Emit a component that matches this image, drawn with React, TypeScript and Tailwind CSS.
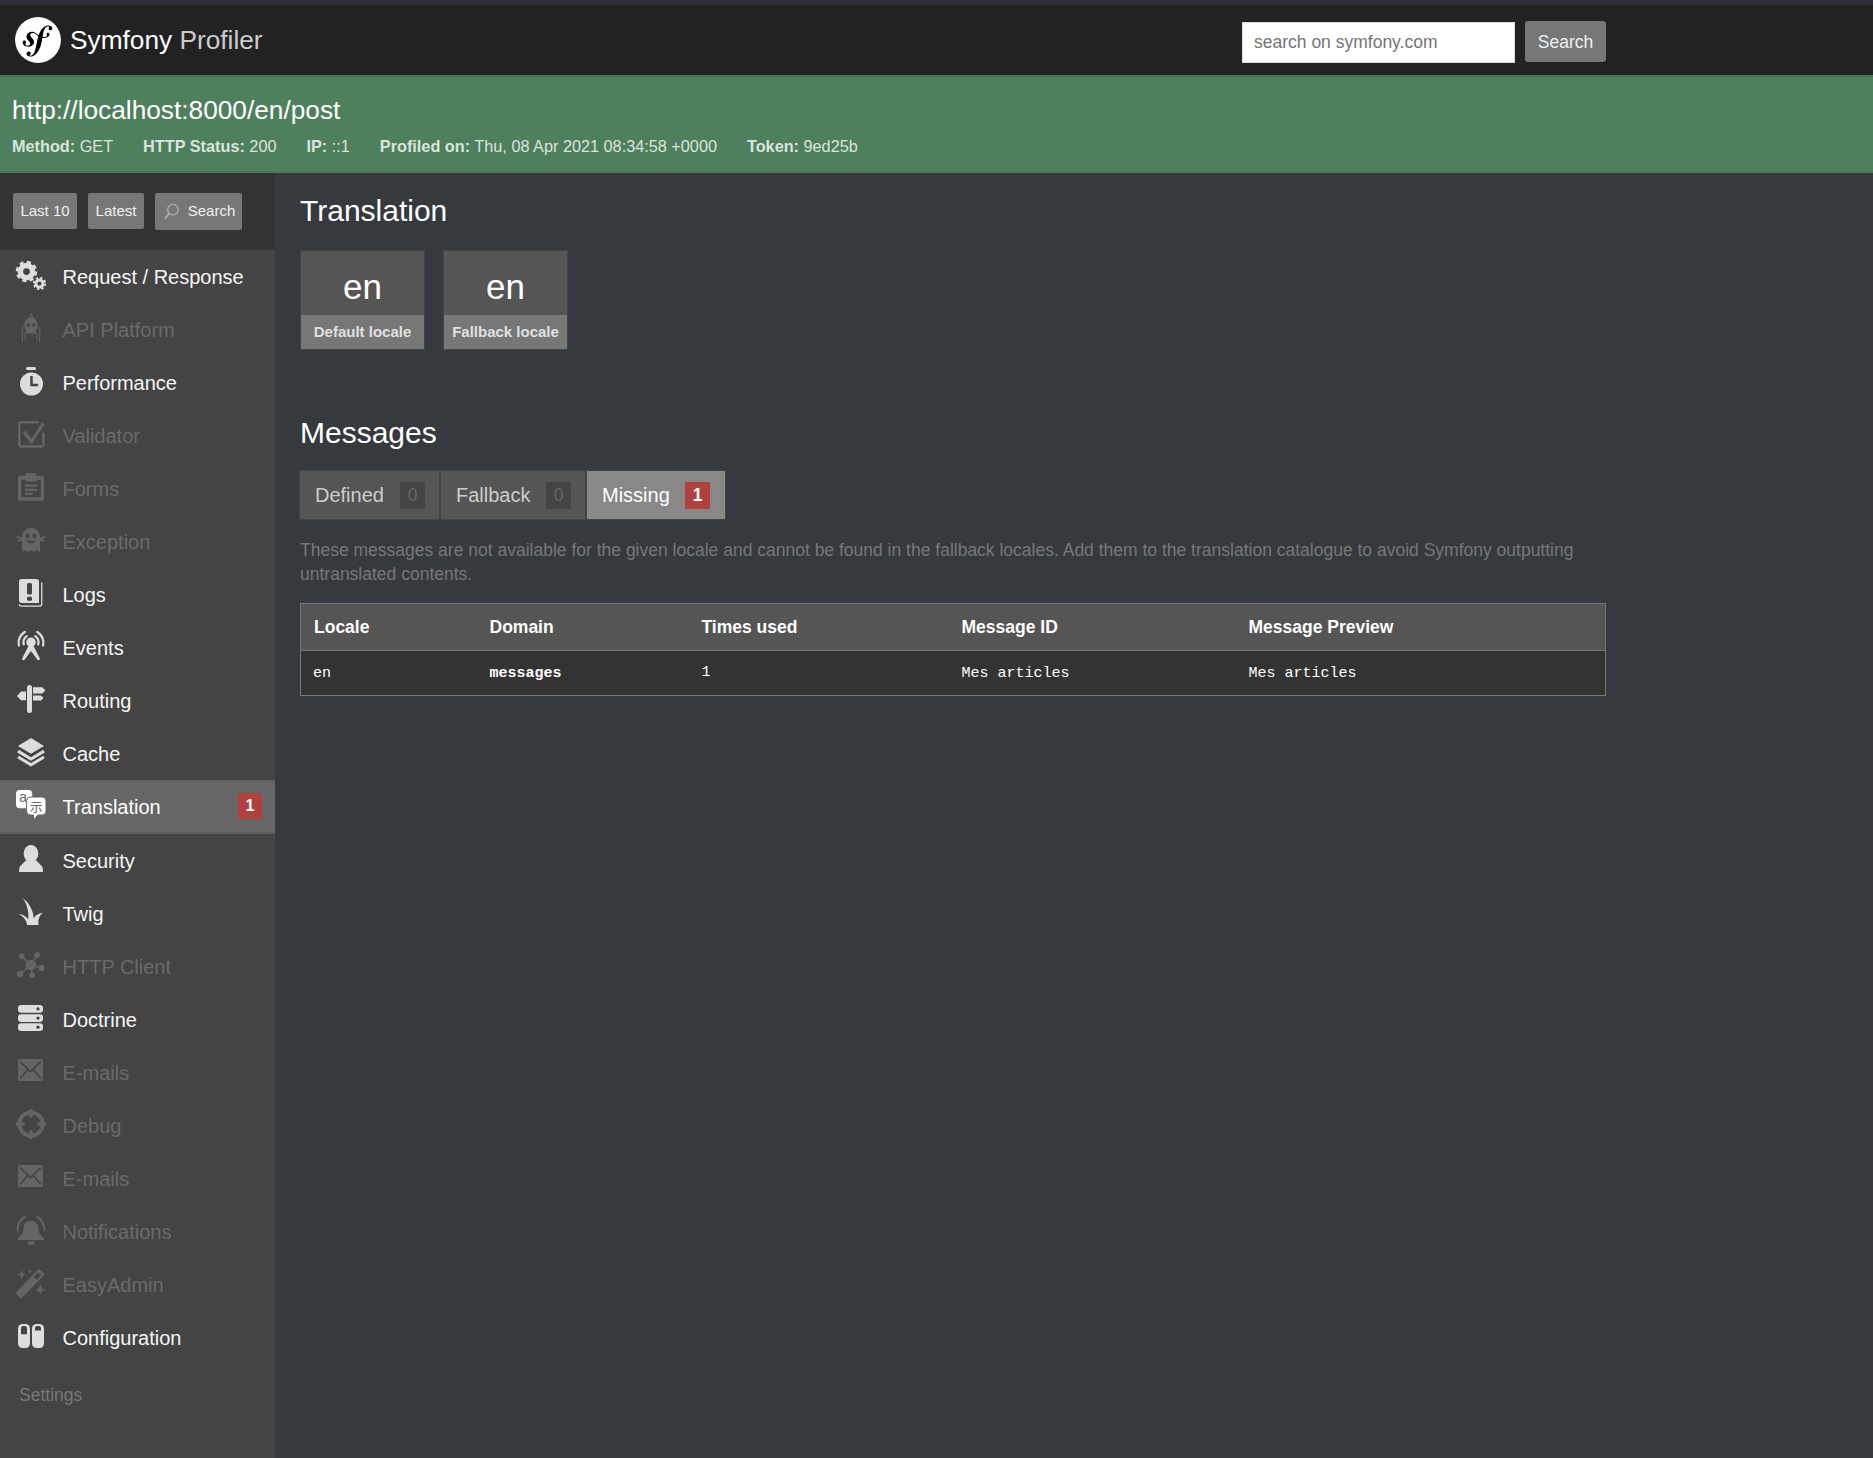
import React from "react";
import { SiSymfony } from "react-icons/si";

const I = ({ children }: { children: React.ReactNode }) => (
  <svg viewBox="0 0 24 24" width="30" height="30" fill="currentColor" className="shrink-0 overflow-visible">{children}</svg>
);

const icons: Record<string, React.ReactNode> = {
  request: (
    <I>
      <circle cx="8.4" cy="9.2" r="4.9" fill="none" stroke="currentColor" strokeWidth="4.4" />
      <circle cx="8.4" cy="9.2" r="7.6" fill="none" stroke="currentColor" strokeWidth="2" strokeDasharray="3.3 2.67" />
      <circle cx="18.8" cy="18.8" r="2.9" fill="none" stroke="currentColor" strokeWidth="2.4" />
      <circle cx="18.8" cy="18.8" r="4.6" fill="none" stroke="currentColor" strokeWidth="1.4" strokeDasharray="1.9 1.71" />
    </I>
  ),
  api: (
    <I>
      <path d="M12 .5l1.7 3.3h-3.4z" fill="none" stroke="currentColor" strokeWidth=".8" />
      <path d="M12 3.5c3.4 0 5.3 3 5.3 6.3 0 2.2-.7 3.7-2 4.7 1 .7 1.5 1 1.6 1.8H7.1c.1-.8.6-1.1 1.6-1.8-1.3-1-2-2.5-2-4.7 0-3.3 1.9-6.3 5.3-6.3z" />
      <path d="M6 10.5L4.8 15l.4 8M18 10.5l1.2 4.5-.4 8M7 16.5l.3 5M17 16.5l-.3 5" fill="none" stroke="currentColor" strokeWidth=".8" />
      <circle cx="9.8" cy="9.5" r="1.4" fill="#444" />
      <circle cx="14.2" cy="9.5" r="1.4" fill="#444" />
    </I>
  ),
  perf: (
    <I>
      <rect x="8" y=".8" width="8" height="2.4" rx="1.2" />
      <circle cx="12.4" cy="14.4" r="9.2" />
      <path d="M12.4 8v7.2h5.3" fill="none" stroke="#444" strokeWidth="2" />
    </I>
  ),
  validator: (
    <I>
      <path d="M18 2.6H4.1a1.500 1.500 0 0 0-1.500 1.500v16.300a1.500 1.500 0 0 0 1.500 1.500h16.300a1.500 1.500 0 0 0 1.500-1.500V11" fill="none" stroke="currentColor" strokeWidth="2" />
      <path d="M6.4 10.2l6.1 8 9.400-14.800" fill="none" stroke="currentColor" strokeWidth="2.6" />
    </I>
  ),
  forms: (
    <I>
      <path d="M7.5 2.300A1.500 1.500 0 0 1 9 .8h6a1.500 1.500 0 0 1 1.500 1.500V3h4.400a1.500 1.500 0 0 1 1.500 1.500v17a1.500 1.500 0 0 1-1.500 1.500H3.100a1.500 1.500 0 0 1-1.500-1.500v-17A1.500 1.500 0 0 1 3.100 3h4.400zM4.300 6.200v14h15.400v-14h-3.200v1.300h-9V6.200z" fillRule="evenodd" />
      <path d="M7 10h10v1.800H7zM7 13.300h10v1.800H7zM7 16.600h6.500v1.800H7z" />
    </I>
  ),
  exception: (
    <I>
      <path d="M12 2.400c4.300 0 7.200 3 7.200 7.100v12.100l-2.400-1.500-2.400 1.500-2.400-1.500-2.400 1.500-2.400-1.500-2.400 1.500V9.500c0-4.100 2.900-7.100 7.200-7.100z" />
      <path d="M5.500 11.500L.5 9.500M1.500 12.800l4-1M18.500 11.500l5-2M22.500 12.800l-4-1" stroke="currentColor" strokeWidth="1.3" fill="none" />
      <ellipse cx="9.2" cy="8.7" rx="1.6" ry="1.9" fill="#444" />
      <ellipse cx="14.8" cy="8.7" rx="1.6" ry="1.9" fill="#444" />
      <path d="M8.300 12.500c1.500 2.800 5.900 2.800 7.400 0z" fill="#444" />
    </I>
  ),
  logs: (
    <I>
      <path d="M4.600.8h11.600a2.200 2.200 0 0 1 2.200 2.200v17H4.600a2.200 2.200 0 0 1-2.200-2.200V3A2.200 2.200 0 0 1 4.600.8z" />
      <path d="M20.600 3.500V20.500a2 2 0 0 1-2 2H4.500c-1.200 0-1.900-.7-2.100-1.500" fill="none" stroke="currentColor" strokeWidth="1" />
      <rect x="8.8" y="4" width="4" height="9.2" rx="1.2" fill="#444" />
      <rect x="8.8" y="15" width="4" height="3.2" rx="1" fill="#444" />
    </I>
  ),
  events: (
    <I>
      <circle cx="12" cy="9" r="3.8" />
      <path d="M10.500 11L5 21.800c-.6 1.400 1.200 2.200 2 1L12 16l5 6.800c.8 1.200 2.600.4 2-1L13.500 11z" />
      <path d="M6.200 10.600A6 6 0 0 1 8.600 4.100M17.800 10.600A6 6 0 0 0 15.400 4.100M2.300 11.600A10 10 0 0 1 7 .8M21.700 11.600A10 10 0 0 0 17 .8" fill="none" stroke="currentColor" strokeWidth="1.8" strokeLinecap="round" />
    </I>
  ),
  routing: (
    <I>
      <rect x="8.8" y=".8" width="4" height="22.4" rx="2" />
      <path d="M13.600 2.500H21l2.500 2.400L21 7.500h-7.400zM13.600 9.200h6.400l2 1.900-2 2h-6.400zM8 6H4L.8 9.500 4 13h4z" />
    </I>
  ),
  cache: (
    <I>
      <path d="M12 .8l10.400 6.300L12 13.400 1.600 7.100z" />
      <path d="M1.600 11.300L12 17.600l10.400-6.300M1.600 16L12 22.200 22.400 16" fill="none" stroke="currentColor" strokeWidth="2.4" />
    </I>
  ),
  translation: (
    <I>
      <rect x="0" y="0" width="13" height="14.5" rx="3" fill="#fff" />
      <text x="2.5" y="9.5" fontSize="11" fill="#666" fontFamily="'Liberation Sans',sans-serif">a</text>
      <path d="M11.500 5.600H21a3 3 0 0 1 3 3v8.400a3 3 0 0 1-3 3h-3.500L14 24v-4h-2.500a3 3 0 0 1-3-3V8.600a3 3 0 0 1 3-3z" fill="#fff" stroke="#666" strokeWidth=".8" />
      <text x="11.2" y="17.5" fontSize="10" fill="#666" fontFamily="'Noto Sans CJK SC',sans-serif">示</text>
    </I>
  ),
  security: (
    <I>
      <ellipse cx="12" cy="7.6" rx="5.9" ry="6.8" />
      <path d="M8 13L3.500 17.500C2.500 18.500 2.400 20 2.400 22.400h19.200c0-2.400-.1-3.900-1.100-4.900L16 13z" />
    </I>
  ),
  twig: (
    <I>
      <path d="M8.800 22.400C8.500 19 7 16.500 2.400 13.500c3.100.3 5.600 1.800 7.400 4.300C10.500 11 8.500 5 5.200.8 10.500 4.500 14 11 14.200 17.500c.8-2.500 3.300-4.500 7.400-5-3.100 2.200-4.100 5.500-3.600 9.900z" />
    </I>
  ),
  http: (
    <I>
      <path d="M11.800 12L4.500 4.800M11.800 12l5-8M11.800 12l8.200 2.400M11.800 12l-8.600 7.200M11.800 12l1.200 8" stroke="currentColor" strokeWidth="1.3" />
      <circle cx="11.8" cy="12" r="4.2" />
      <circle cx="4.5" cy="4.8" r="2.3" />
      <circle cx="16.8" cy="4" r="2.3" />
      <circle cx="20.4" cy="14.4" r="2.6" />
      <circle cx="3.2" cy="19.2" r="2.6" />
      <circle cx="13" cy="20.2" r="2.3" />
    </I>
  ),
  doctrine: (
    <I>
      <rect x="1.6" y="1.6" width="20" height="6.2" rx="2.6" />
      <rect x="1.6" y="8.9" width="20" height="6.2" rx="2.6" />
      <rect x="1.6" y="16.2" width="20" height="6.2" rx="2.6" />
      <circle cx="17.6" cy="4.7" r="1.3" fill="#444" />
      <circle cx="17.6" cy="12" r="1.3" fill="#444" />
      <circle cx="17.6" cy="19.3" r="1.3" fill="#444" />
    </I>
  ),
  mail: (
    <I>
      <rect x="1.6" y="2.4" width="20" height="17.6" rx="1.5" />
      <path d="M3.300 4.500l8.300 8 8.300-8M3.300 18l6-7M19.900 18l-6-7" fill="none" stroke="#444" strokeWidth="1.3" />
    </I>
  ),
  debug: (
    <I>
      <circle cx="12" cy="12" r="9.3" fill="none" stroke="currentColor" strokeWidth="3.2" />
      <path d="M12 0v7M12 17v7M0 12h7M17 12h7" stroke="currentColor" strokeWidth="2.6" />
    </I>
  ),
  bell: (
    <I>
      <path d="M12 4.500c3.800 0 6 3 6 6.500 0 3.500 1.800 5.500 4.500 7.500v1.500h-21v-1.500c2.700-2 4.500-4 4.500-7.500 0-3.500 2.200-6.500 6-6.500z" />
      <path d="M9 21h6a3 3 0 0 1-6 0z" />
      <path d="M1.200 13C.8 8 3.500 3.500 7.500 1.200M22.800 13c.4-5-2.300-9.500-6.300-11.800" fill="none" stroke="currentColor" strokeWidth="1.7" />
    </I>
  ),
  wand: (
    <I>
      <path d="M18 .8l5.200 4.200L5 23.500a1.500 1.500 0 0 1-2 0L.5 21.200a1.500 1.500 0 0 1 0-2z" />
      <path d="M17.500 3.600l2.600 2.200-3.300 3.500-2.700-2.300z" fill="#444" />
      <path d="M4.500 1.500l1 2.700 2.700 1-2.700 1-1 2.700-1-2.700-2.700-1 2.700-1zM11 .5l.6 1.600 1.600.6-1.600.6-.6 1.600-.6-1.600-1.600-.6 1.600-.6zM19.500 13l1.200 3.100 3.100 1.200-3.100 1.200-1.200 3.100-1.200-3.100-3.100-1.200 3.100-1.200z" />
    </I>
  ),
  config: (
    <I>
      <rect x="1.6" y="2.4" width="9.6" height="19.2" rx="3.6" />
      <rect x="12.8" y="2.4" width="9.6" height="19.2" rx="3.6" />
      <path d="M4 10.500V5.800A1.800 1.800 0 0 1 5.800 4H7a1.800 1.800 0 0 1 1.800 1.800v4.700z" fill="#444" />
      <path d="M15.200 7.500V5.800A1.800 1.800 0 0 1 17 4h1.200A1.800 1.800 0 0 1 20 5.800v1.700z" fill="#444" />
    </I>
  ),
};

const items: { label: string; icon: string; off?: boolean; active?: boolean }[] = [
  { label: "Request / Response", icon: "request" },
  { label: "API Platform", icon: "api", off: true },
  { label: "Performance", icon: "perf" },
  { label: "Validator", icon: "validator", off: true },
  { label: "Forms", icon: "forms", off: true },
  { label: "Exception", icon: "exception", off: true },
  { label: "Logs", icon: "logs" },
  { label: "Events", icon: "events" },
  { label: "Routing", icon: "routing" },
  { label: "Cache", icon: "cache" },
  { label: "Translation", icon: "translation", active: true },
  { label: "Security", icon: "security" },
  { label: "Twig", icon: "twig" },
  { label: "HTTP Client", icon: "http", off: true },
  { label: "Doctrine", icon: "doctrine" },
  { label: "E-mails", icon: "mail", off: true },
  { label: "Debug", icon: "debug", off: true },
  { label: "E-mails", icon: "mail", off: true },
  { label: "Notifications", icon: "bell", off: true },
  { label: "EasyAdmin", icon: "wand", off: true },
  { label: "Configuration", icon: "config" },
];

const Meta = ({ k, v }: { k: string; v: string }) => (
  <span className="mr-[30px]">
    <b className="font-bold text-[#d9e5dc]">{k}</b> <span className="text-[#d9e5dc]">{v}</span>
  </span>
);

const Metric = ({ value, label }: { value: string; label: string }) => (
  <div className="w-[125px] h-[100px] border border-[#444] flex flex-col">
    <div className="h-[64px] bg-[#555] text-white text-[35px] leading-[64px] pt-[4px] text-center">{value}</div>
    <div className="flex-1 bg-[#777] text-[#e0e0e0] text-[15px] font-bold leading-[34px] text-center">{label}</div>
  </div>
);

const Tab = ({ label, count, active, w }: { label: string; count: string; active?: boolean; w: string }) => (
  <div className={`${w} h-[50px] border border-[#444] flex items-center justify-between pl-[15px] text-[20px] ${active ? "pr-[15px] bg-[#888] text-white" : "pr-[14px] bg-[#555] text-[#ccc]"}`}>
    <span>{label}</span>
    <span className={`w-[25px] h-[27px] flex items-center justify-center text-[17.5px] ${active ? "bg-[#b0413e] text-white font-bold" : "bg-[#444] text-[#666]"}`}>{count}</span>
  </div>
);

export default function App() {
  return (
    <div className="min-h-[1458px] flex flex-col bg-[#36393e] font-['Liberation_Sans',Arial,sans-serif]">
      <div className="h-[5px] bg-[#332f36]" />
      <header className="h-[70px] bg-[#222] flex items-center">
        <div className="w-[1606px] flex items-center justify-between pl-[15px]">
          <div className="flex items-center">
            <span className="relative w-[46px] h-[46px] rounded-full bg-white flex items-center justify-center">
              <SiSymfony className="absolute inset-0 text-white bg-black rounded-full" size={46} />
            </span>
            <span className="ml-[9px] mt-[2px] text-[26.25px] text-white">Symfony <span className="text-[#ccc]">Profiler</span></span>
          </div>
          <div className="flex items-start gap-[10px] mt-[4px]">
            <input
              readOnly
              placeholder="search on symfony.com"
              className="w-[273px] h-[41px] mt-[1px] bg-white border border-[#ddd] px-[11px] text-[17.5px] placeholder:text-[#757575] outline-none"
            />
            <button className="w-[81px] h-[41px] pt-[1px] bg-[#777] rounded-[3px] text-[17.5px] text-[#f0f0f0]">Search</button>
          </div>
        </div>
      </header>
      <section className="h-[98px] bg-[#4f805d] border-y-2 border-[#4a7857] px-[12px] text-white">
        <h1 className="text-[26.25px] leading-[30px] mt-[18px]">http://localhost:8000/en/post</h1>
        <div className="text-[16.25px] leading-[20px] mt-[11px]">
          <Meta k="Method:" v="GET" />
          <Meta k="HTTP Status:" v="200" />
          <Meta k="IP:" v="::1" />
          <Meta k="Profiled on:" v="Thu, 08 Apr 2021 08:34:58 +0000" />
          <Meta k="Token:" v="9ed25b" />
        </div>
      </section>
      <div className="flex-1 flex">
        <aside className="w-[275px] shrink-0 bg-[#444]">
          <div className="h-[77px] bg-[#333] flex items-start pt-[20px] pl-[13px] gap-[11px] text-[15px] text-[#f0f0f0]">
            <span className="w-[64px] h-[36px] bg-[#777] rounded-[2px] flex items-center justify-center">Last 10</span>
            <span className="w-[56px] h-[36px] bg-[#777] rounded-[2px] flex items-center justify-center">Latest</span>
            <span className="w-[87px] h-[37px] bg-[#777] rounded-[2px] flex items-center justify-center gap-[7px]">
              <svg viewBox="0 0 20 20" width="19" height="19" fill="none" stroke="#aaa" strokeWidth="1.5" className="shrink-0">
                <circle cx="11.5" cy="8" r="5.5" />
                <path d="M7.500 12L3 17.500" strokeWidth="2" />
              </svg>
              Search
            </span>
          </div>
          <nav>
            {items.map((it, idx) => (
              <div
                key={idx}
                className={`h-[53.05px] flex items-center pl-[16px] pr-[13px] text-[20px] ${it.active ? "bg-[#666] border-y-2 border-[#5f5f5f] text-white" : it.off ? "text-[#6a6a6a]" : "text-[#f5f5f5]"}`}
              >
                <span className={`${it.off ? "text-[#646464]" : "text-[#ddd]"} -mt-[3px] flex`}>{icons[it.icon]}</span>
                <span className="ml-[16.5px] flex-1 pt-[1px]">{it.label}</span>
                {it.active && <span className="w-[24px] h-[26px] bg-[#b0413e] text-white text-[16px] font-bold flex items-center justify-center -mt-[2px]">1</span>}
              </div>
            ))}
          </nav>
          <div className="pl-[19px] pt-[19px] text-[17.5px] leading-[24px] text-[#777]">Settings</div>
        </aside>
        <main className="w-[1331px] pl-[25px]">
          <div className="w-[1306px]">
            <h2 className="text-[30px] leading-[36px] text-white mt-[20px]">Translation</h2>
            <div className="flex gap-[18px] mt-[21px]">
              <Metric value="en" label="Default locale" />
              <Metric value="en" label="Fallback locale" />
            </div>
            <h2 className="text-[30px] leading-[36px] text-white mt-[65px]">Messages</h2>
            <div className="flex mt-[19px] -ml-[1px]">
              <Tab label="Defined" count="0" w="w-[141px]" />
              <Tab label="Fallback" count="0" w="w-[146px]" />
              <Tab label="Missing" count="1" active w="w-[140px]" />
            </div>
            <p className="text-[17.5px] leading-[24px] text-[#777] mt-[18px]">
              These messages are not available for the given locale and cannot be found in the fallback locales. Add them to the translation catalogue to avoid Symfony outputting untranslated contents.
            </p>
            <table className="w-full table-fixed border border-[#777] mt-[17px] border-collapse">
              <colgroup>
                <col className="w-[176px]" />
                <col className="w-[212px]" />
                <col className="w-[260px]" />
                <col className="w-[287px]" />
                <col />
              </colgroup>
              <thead>
                <tr className="bg-[#555] text-white text-[17.5px] font-bold text-left h-[47px] border-b border-[#777]">
                  <th className="pl-[13px]">Locale</th>
                  <th className="pl-[13px]">Domain</th>
                  <th className="pl-[13px]">Times used</th>
                  <th className="pl-[13px]">Message ID</th>
                  <th className="pl-[13px]">Message Preview</th>
                </tr>
              </thead>
              <tbody>
                <tr className="bg-[#333] text-white text-[15px] h-[45px] font-['Liberation_Mono',monospace]">
                  <td className="pl-[12px] pt-[2px]">en</td>
                  <td className="pl-[13px] pt-[2px] font-bold">messages</td>
                  <td className="pl-[13px] pt-[1px]">1</td>
                  <td className="pl-[13px] pt-[3px]">Mes articles</td>
                  <td className="pl-[13px] pt-[3px]">Mes articles</td>
                </tr>
              </tbody>
            </table>
          </div>
        </main>
      </div>
    </div>
  );
}
